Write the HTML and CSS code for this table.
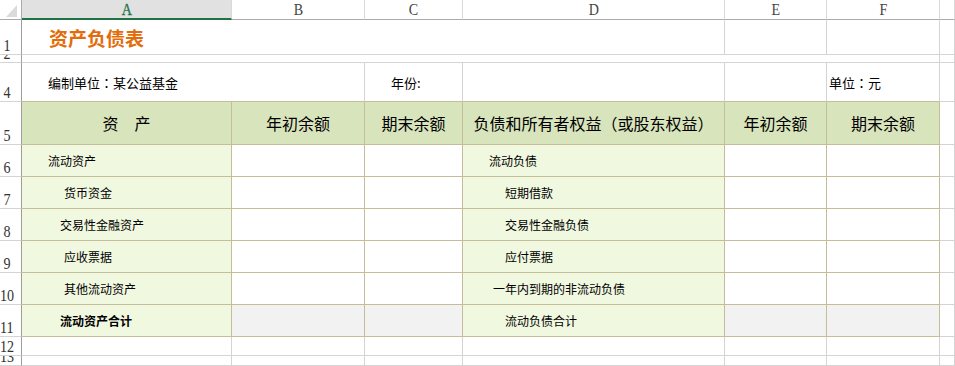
FILE: index.html
```html
<!DOCTYPE html>
<html lang="zh-CN">
<head>
<meta charset="utf-8">
<title>资产负债表</title>
<link rel="stylesheet" href="styles.css">
</head>
<body>
<div class="sheet">
  <!-- column headers -->
  <div class="ch corner"><div class="tri"></div></div>
  <div class="ch sel"><span class="num">A</span></div>
  <div class="ch"><span class="num">B</span></div>
  <div class="ch"><span class="num">C</span></div>
  <div class="ch"><span class="num">D</span></div>
  <div class="ch"><span class="num">E</span></div>
  <div class="ch"><span class="num">F</span></div>
  <div class="ch"></div>

  <!-- row 1 -->
  <div class="rh"><span class="num">1</span></div>
  <div class="c span4 title">资产负债表</div>
  <div class="c"></div>
  <div class="c"></div>
  <div class="c"></div>

  <!-- row 2 -->
  <div class="rh"><span class="num">2</span></div>
  <div class="c span6"></div>
  <div class="c"></div>

  <!-- row 4 -->
  <div class="rh"><span class="num">4</span></div>
  <div class="c span2 info tt i26">编制单位<span class="pc">：</span>某公益基金</div>
  <div class="c info tt i26">年份:</div>
  <div class="c tt"></div>
  <div class="c tt"></div>
  <div class="c info tt i2">单位<span class="pc">：</span>元</div>
  <div class="c"></div>

  <!-- row 5 -->
  <div class="rh"><span class="num">5</span></div>
  <div class="c t hd">资　产</div>
  <div class="c t hd">年初余额</div>
  <div class="c t hd">期末余额</div>
  <div class="c t hd">负债和所有者权益<span class="pc">（</span>或股东权益<span class="pc">）</span></div>
  <div class="c t hd">年初余额</div>
  <div class="c t hd">期末余额</div>
  <div class="c"></div>

  <!-- row 6 -->
  <div class="rh"><span class="num">6</span></div>
  <div class="c t lb i26">流动资产</div>
  <div class="c t"></div>
  <div class="c t"></div>
  <div class="c t lb i26">流动负债</div>
  <div class="c t"></div>
  <div class="c t"></div>
  <div class="c"></div>

  <!-- row 7 -->
  <div class="rh"><span class="num">7</span></div>
  <div class="c t lb i42">货币资金</div>
  <div class="c t"></div>
  <div class="c t"></div>
  <div class="c t lb i42">短期借款</div>
  <div class="c t"></div>
  <div class="c t"></div>
  <div class="c"></div>

  <!-- row 8 -->
  <div class="rh"><span class="num">8</span></div>
  <div class="c t lb i38">交易性金融资产</div>
  <div class="c t"></div>
  <div class="c t"></div>
  <div class="c t lb i42">交易性金融负债</div>
  <div class="c t"></div>
  <div class="c t"></div>
  <div class="c"></div>

  <!-- row 9 -->
  <div class="rh"><span class="num">9</span></div>
  <div class="c t lb i42">应收票据</div>
  <div class="c t"></div>
  <div class="c t"></div>
  <div class="c t lb i42">应付票据</div>
  <div class="c t"></div>
  <div class="c t"></div>
  <div class="c"></div>

  <!-- row 10 -->
  <div class="rh"><span class="num">10</span></div>
  <div class="c t lb i42">其他流动资产</div>
  <div class="c t"></div>
  <div class="c t"></div>
  <div class="c t lb i30">一年内到期的非流动负债</div>
  <div class="c t"></div>
  <div class="c t"></div>
  <div class="c"></div>

  <!-- row 11 -->
  <div class="rh"><span class="num">11</span></div>
  <div class="c t lb i38 bold">流动资产合计</div>
  <div class="c t gr"></div>
  <div class="c t gr"></div>
  <div class="c t lb i42">流动负债合计</div>
  <div class="c t gr"></div>
  <div class="c t gr"></div>
  <div class="c"></div>

  <!-- row 12 -->
  <div class="rh"><span class="num">12</span></div>
  <div class="c"></div>
  <div class="c"></div>
  <div class="c"></div>
  <div class="c"></div>
  <div class="c"></div>
  <div class="c"></div>
  <div class="c"></div>

  <!-- row 13 -->
  <div class="rh"><span class="num">13</span></div>
  <div class="c"></div>
  <div class="c"></div>
  <div class="c"></div>
  <div class="c"></div>
  <div class="c"></div>
  <div class="c"></div>
  <div class="c"></div>
</div>
</body>
</html>
```

FILE: styles.css
```css
* { box-sizing: border-box; }
html, body {
  margin: 0;
  padding: 0;
  background: #ffffff;
  overflow: hidden;
}
body {
  width: 955px;
  height: 366px;
  font-family: "Noto Sans CJK SC", "Noto Sans", sans-serif;
  color: #000;
}
.sheet {
  display: grid;
  grid-template-columns: 22px 210px 133px 98px 262px 102px 113px 1fr;
  grid-template-rows: 20px 35px 8px 39px 43px repeat(6, 32px) 19px 1fr;
  width: 955px;
  height: 366px;
}
.ch {
  display: flex;
  align-items: center;
  justify-content: center;
  background: #ffffff;
  border-right: 1px solid #d9d9d9;
  border-bottom: 1px solid #ababab;
  color: #444;
  overflow: hidden;
}
.ch.corner {
  border-right: 1px solid #ababab;
  align-items: flex-end;
  justify-content: flex-end;
  padding: 0 4px 2px 0;
}
.tri {
  width: 11px;
  height: 12px;
  background: #dadada;
  clip-path: polygon(100% 0, 100% 100%, 0 100%);
}
.ch.sel {
  background: #e1e1e1;
  border-bottom: 2px solid #217346;
  color: #217346;
  font-weight: bold;
}
.num {
  font-family: "Liberation Serif", "DejaVu Serif", serif;
  font-size: 16px;
  line-height: 1;
  display: inline-block;
  transform: scaleX(0.88);
}
.ch .num { margin-top: 1px; }
.ch.sel .num { font-weight: normal; -webkit-text-stroke: 0.3px #217346; }
.rh {
  display: flex;
  align-items: flex-end;
  justify-content: center;
  padding: 0 8px 0 0;
  border-right: 1px solid #9e9e9e;
  border-bottom: 1px solid #d4d4d4;
  color: #333;
  overflow: hidden;
}
.c {
  display: flex;
  align-items: center;
  border-right: 1px solid #d4d4d4;
  border-bottom: 1px solid #d4d4d4;
  font-size: 12px;
  white-space: nowrap;
  overflow: hidden;
}
.span2 { grid-column: span 2; }
.span4 { grid-column: span 4; }
.span6 { grid-column: span 6; }
.title {
  padding-left: 27px;
  font-size: 19px;
  font-weight: bold;
  color: #e36c0a;
}
.info { font-size: 13px; }
.pc { font-family: "Noto Sans CJK TC", "Noto Sans CJK SC", sans-serif; }
.tt { border-bottom-color: #c4bd97; }
.t {
  border-right-color: #c4bd97;
  border-bottom-color: #c4bd97;
}
.hd {
  background: #d8e4bc;
  justify-content: center;
  font-size: 16px;
}
.lb { background: #f0f8e0; }
.gr { background: #f2f2f2; }
.bold { font-weight: bold; }
.i2 { padding-left: 2px; }
.i26 { padding-left: 26px; }
.i30 { padding-left: 30px; }
.i38 { padding-left: 38px; }
.i42 { padding-left: 42px; }
```
